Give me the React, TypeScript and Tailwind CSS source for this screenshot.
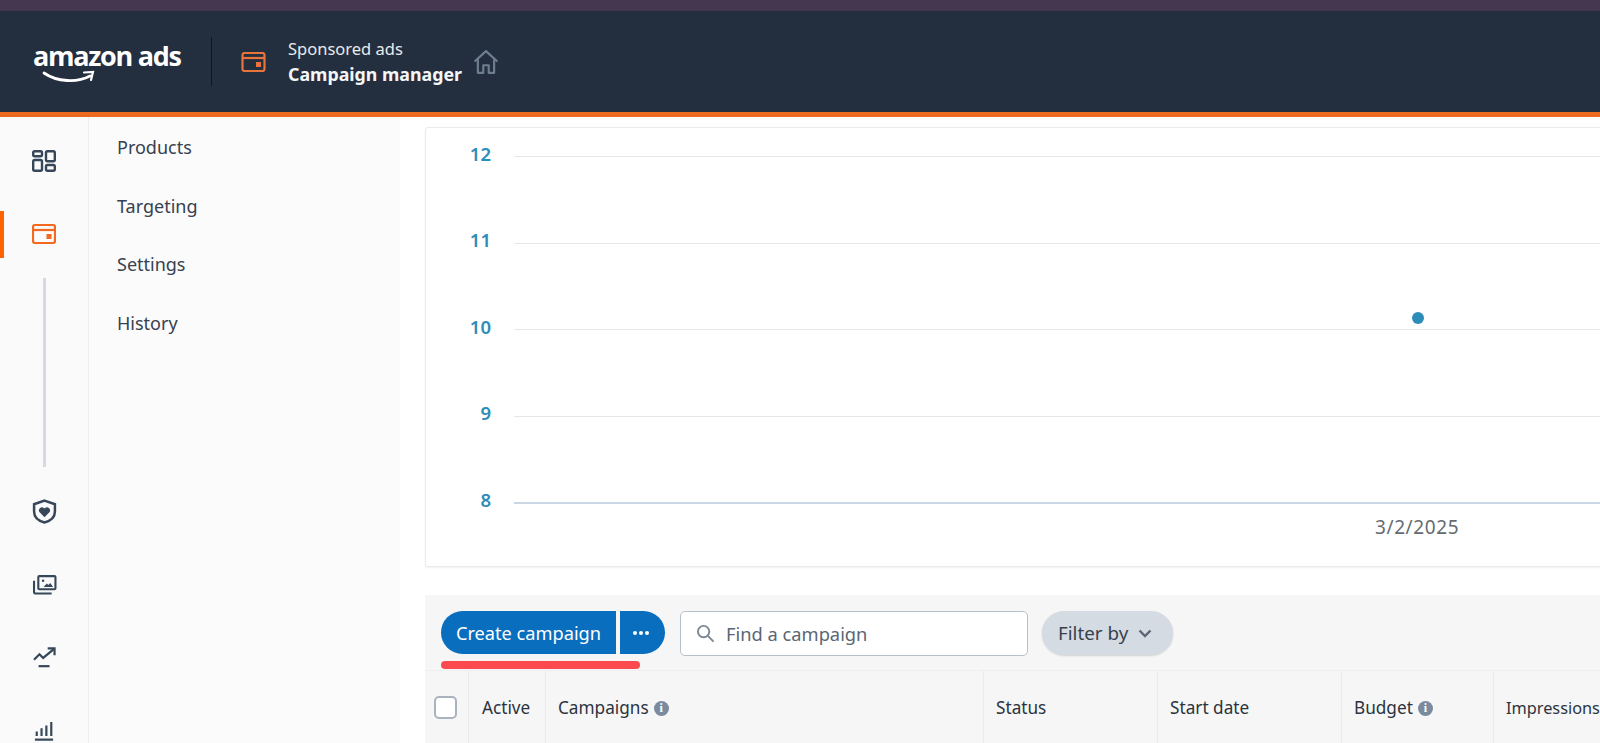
const FONT = "font-['Noto_Sans','Open_Sans',sans-serif]";

function CardIcon({ className }: { className: string }) {
  return (
    <svg viewBox="0 0 24 20" fill="none" stroke="currentColor" strokeWidth="2.200" className={className}>
      <rect x="1" y="1" width="22" height="18" rx="2" />
      <path d="M1 6h22" />
      <rect x="14.500" y="10" width="5" height="5" fill="currentColor" stroke="none" />
    </svg>
  );
}

function RailItem({ children }: { children: React.ReactNode }) {
  return <div className="flex h-[73px] w-full shrink-0 items-center justify-center text-[#37475a]">{children}</div>;
}

function InfoDot() {
  return (
    <span className="ml-[5px] inline-flex h-[15px] w-[15px] items-center justify-center rounded-full bg-[#7b8a9d] font-['Liberation_Serif',serif] text-[12px] font-bold leading-none text-white">
      i
    </span>
  );
}

const yLabels = ["12", "11", "10", "9", "8"];
const navLinks = ["Products", "Targeting", "Settings", "History"];
const columns = [
  { label: "Status", width: "w-[174px]" },
  { label: "Start date", width: "w-[184px]" },
  { label: "Budget", width: "w-[152px]", info: true },
  { label: "Impressions", width: "flex-1 text-[16.300px]" },
];

export default function App() {
  return (
    <div className={`flex h-[743px] w-[1600px] flex-col overflow-hidden bg-white ${FONT}`}>
      <div className="h-[11px] shrink-0 bg-[#453750]" />

      <header className="flex h-[106px] shrink-0 items-center border-b-[5px] border-[#ee6a1f] bg-[#232f3e] text-white">
        <div className="relative ml-[33px] h-[50px] w-[145px]">
          <span className="block font-['Open_Sans',sans-serif] text-[27px] font-bold leading-[38px] tracking-[-1.300px] whitespace-nowrap">
            amazon ads
          </span>
          <svg viewBox="0 0 56 16" className="absolute left-[9px] top-[33px] h-[16px] w-[56px]" fill="none" stroke="white" strokeLinecap="round">
            <path d="M2 3c13 9 33 10 46 3" strokeWidth="2.800" />
            <path d="M42 2.500l9-.5-2 8" strokeWidth="2.200" />
          </svg>
        </div>
        <div className="ml-[33px] h-[49px] w-px bg-[#10181f]" />
        <CardIcon className="ml-[29px] h-[20px] w-[25px] text-[#e8743b]" />
        <div className="ml-[22px] flex flex-col">
          <span className="text-[16.500px] leading-[25px] text-[#e8eaed]">Sponsored ads</span>
          <span className="text-[17.800px] font-bold leading-[26px] text-[#f5f6f7]">Campaign manager</span>
        </div>
        <svg viewBox="0 0 24 24" fill="none" stroke="#6f7e8f" strokeWidth="2" strokeLinejoin="round" className="ml-[11px] h-[26px] w-[26px]">
          <path d="M1.500 11.500 12 2l10.500 9.500" />
          <path d="M4.500 9.500V22h5v-7h5v7h5V9.500" />
        </svg>
      </header>

      <div className="flex min-h-0 flex-1">
        <aside className="flex w-[89px] shrink-0 flex-col items-center border-r border-[#eeeeee] bg-[#fafafa] pt-[7px] shadow-[1px_0_4px_rgba(0,0,0,0.05)]">
          <RailItem>
            <svg viewBox="0 0 24 22" fill="none" stroke="currentColor" strokeWidth="2.400" className="h-[22px] w-[24px]">
              <rect x="1.200" y="1.200" width="8.800" height="5" rx="1.500" />
              <rect x="14" y="1.200" width="8.800" height="10" rx="1.500" />
              <rect x="1.200" y="10" width="8.800" height="10.800" rx="1.500" />
              <rect x="14" y="15" width="8.800" height="5.800" rx="1.500" />
            </svg>
          </RailItem>
          <div className="relative flex h-[73px] w-full shrink-0 items-center justify-center">
            <span className="absolute left-0 top-[14px] h-[47px] w-[4px] bg-[#ff6200]" />
            <CardIcon className="h-[20px] w-[24px] text-[#f2691f]" />
          </div>
          <div className="mt-[8px] h-[189px] w-[3px] shrink-0 bg-[#d5d9e0]" />
          <div className="mt-[8px] w-full">
            <RailItem>
              <svg viewBox="0 0 24 24" fill="none" stroke="currentColor" strokeWidth="2.400" className="h-[25px] w-[25px]">
                <path d="M12 1.500 22 5v7c0 5.500-4.200 9-10 10.500C6.200 21 2 17.500 2 12V5z" />
                <path d="M12 17.500 7.300 12.800a3 3 0 0 1 4.200-4.200l.5.500.5-.5a3 3 0 0 1 4.200 4.200z" fill="currentColor" stroke="none" />
              </svg>
            </RailItem>
            <RailItem>
              <svg viewBox="0 0 25 21" fill="none" stroke="currentColor" strokeWidth="2.200" className="h-[20px] w-[25px]">
                <rect x="6" y="1.200" width="18" height="13.800" rx="1" />
                <path d="M1.500 6v11.500a2 2 0 0 0 2 2H20" />
                <path d="m11.500 12.500 3.500-3.500 1.500 1.500 2-2 3 4z" fill="currentColor" stroke="none" />
                <circle cx="11" cy="6" r="1.300" fill="currentColor" stroke="none" />
              </svg>
            </RailItem>
            <RailItem>
              <svg viewBox="0 0 25 23" fill="none" stroke="currentColor" strokeWidth="2.400" className="h-[21px] w-[25px]">
                <path d="m1 14 6-6 4 4L23 2" />
                <path d="M16 1.500h7.500V9" />
                <path d="M6 21h12" />
              </svg>
            </RailItem>
            <RailItem>
              <svg viewBox="0 0 22 22" fill="none" stroke="currentColor" strokeWidth="2.400" className="h-[20px] w-[20px]">
                <path d="M1 20.500h20" />
                <path d="M3 16.500v-5M8.300 16.500V8M13.600 16.500V5M19 16.500V1" />
              </svg>
            </RailItem>
          </div>
        </aside>

        <nav className="flex w-[311px] shrink-0 flex-col gap-[24.500px] bg-[#fbfbfc] pl-[28px] pt-[13px] text-[18px] leading-[34px] text-[#37414f]">
          {navLinks.map((link) => (
            <span key={link}>{link}</span>
          ))}
        </nav>

        <main className="min-w-0 flex-1 overflow-hidden pl-[25px] pt-[10px]">
          <section className="relative h-[440px] w-[1300px] rounded-[3px] border border-[#e9ebed] bg-white pt-[28px] shadow-[0_1px_2px_rgba(0,0,0,0.06)]">
            <div className="flex flex-col gap-[85.500px]">
              {yLabels.map((value, i) => (
                <div key={value} className="flex h-px items-center">
                  <span className="w-[88px] -translate-y-[3px] pr-[23px] text-right text-[18.500px] font-semibold text-[#2e8cb8]">
                    {value}
                  </span>
                  <span className={`flex-1 ${i === 4 ? "h-[2px] bg-[#c9d6e4]" : "h-px bg-[#e4e7ea]"}`} />
                </div>
              ))}
            </div>
            <span className="absolute left-[986px] top-[184px] h-[12px] w-[12px] rounded-full bg-[#2e8cb8]" />
            <p className="mt-[11px] pl-[949px] text-[19px] leading-[26px] tracking-[0.6px] text-[#666b70]">3/2/2025</p>
          </section>

          <section className="mt-[28px] w-[1300px] bg-[#f6f6f6]">
            <div className="relative flex h-[75px] items-start pl-[16px] pt-[16px]">
              <button className="flex h-[43px] w-[175px] items-center justify-center rounded-l-full bg-[#0a6ebf] pt-[2px] text-[18.200px] text-white">
                Create campaign
              </button>
              <button className="ml-[4px] flex h-[43px] w-[45px] items-center justify-center gap-[2px] rounded-r-full bg-[#0a6ebf] pr-[4px]">
                <span className="h-[4px] w-[4px] rounded-full bg-white" />
                <span className="h-[4px] w-[4px] rounded-full bg-white" />
                <span className="h-[4px] w-[4px] rounded-full bg-white" />
              </button>
              <label className="ml-[15px] flex h-[45px] w-[348px] items-center rounded-[5px] border border-[#b8c0cb] bg-white pl-[15px] text-[18.300px] text-[#5b6675]">
                <svg viewBox="0 0 20 20" fill="none" stroke="#7b8796" strokeWidth="2" className="h-[19px] w-[19px]">
                  <circle cx="8" cy="8" r="6" />
                  <path d="m12.500 12.500 6 6" />
                </svg>
                <span className="ml-[11px]">Find a campaign</span>
              </label>
              <button className="ml-[14px] flex h-[44px] w-[131px] items-center rounded-full bg-[#d5dbe3] pl-[16px] text-[18.800px] text-[#37414f] shadow-[0_1px_2px_rgba(0,0,0,0.15)]">
                Filter by
                <svg viewBox="0 0 14 9" fill="none" stroke="#5b6675" strokeWidth="2.400" className="ml-[10px] h-[9px] w-[14px]">
                  <path d="m1.500 1.500 5.500 5.500 5.500-5.500" />
                </svg>
              </button>
              <span className="absolute left-[16px] top-[66px] h-[8px] w-[199px] rounded-full bg-[#fb4b4e]" />
            </div>
            <div className="flex h-[76px] border-t border-[#efefef] text-[17.200px] text-[#2b3340]">
              <div className="flex w-[44px] items-center justify-center border-r border-[#ebebeb] pb-[3px] pr-[2px]">
                <span className="h-[23px] w-[23px] rounded-[5px] border-2 border-[#a9b2bd] bg-white" />
              </div>
              <div className="flex w-[77px] items-center border-r border-[#ebebeb] pb-[1px] pl-[13px]">Active</div>
              <div className="flex w-[438px] items-center border-r border-[#ebebeb] pb-[1px] pl-[12px]">
                Campaigns
                <InfoDot />
              </div>
              {columns.map((col) => (
                <div key={col.label} className={`flex ${col.width} items-center border-r border-[#ebebeb] pb-[1px] pl-[12px]`}>
                  {col.label}
                  {col.info && <InfoDot />}
                </div>
              ))}
            </div>
          </section>
        </main>
      </div>
    </div>
  );
}
